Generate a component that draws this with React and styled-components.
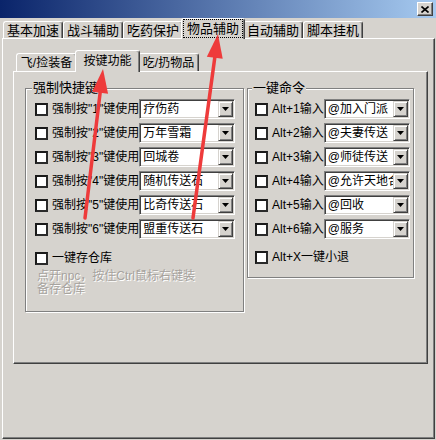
import React from 'react';
import styled, { createGlobalStyle } from 'styled-components';

const Global = createGlobalStyle`
  html, body { margin: 0; padding: 0; background: #d6d3ce; }
  body {
    width: 436px; height: 440px; overflow: hidden;
    font-family: "Liberation Sans", "Noto Sans CJK SC", sans-serif;
    color: #000;
  }
`;

const FACE = '#d6d3ce';

const Window = styled.div`
  position: relative;
  width: 436px;
  height: 440px;
  background: ${FACE};
  display: flex;
  flex-direction: column;
  overflow: hidden;
`;

const TitleBar = styled.div`
  flex-shrink: 0;
  height: 18px;
  background: linear-gradient(to right, #0a246a, #a6caf0);
  display: flex;
  justify-content: flex-end;
  align-items: center;
  padding-right: 3px;
`;

const CloseButton = styled.div`
  width: 16px;
  height: 14px;
  box-sizing: border-box;
  background: ${FACE};
  border: 1px solid;
  border-color: #fff #404040 #404040 #fff;
  box-shadow: inset -1px -1px 0 #808080;
  display: flex;
  align-items: center;
  justify-content: center;
`;

const Body = styled.div`
  flex: 1;
  display: flex;
  flex-direction: column;
  padding: 0 1px 1px 2px;
  min-height: 0;
`;

const TabStrip = styled.div`
  display: flex;
  align-items: flex-end;
  height: ${p => p.$h}px;
  padding-left: ${p => p.$pad}px;
  position: relative;
  z-index: 2;
  flex-shrink: 0;
`;

const Tab = styled.div`
  box-sizing: border-box;
  width: ${p => (p.$active ? p.$w + 4 : p.$w)}px;
  margin: 0 ${p => (p.$active ? -2 : 0)}px ${p => (p.$active ? -1 : 0)}px;
  height: ${p => (p.$active ? p.$hA : p.$hI)}px;
  background: ${FACE};
  border-top: 1px solid #fff;
  border-left: 1px solid #fff;
  border-right: 1px solid #404040;
  box-shadow: inset -1px 0 0 #808080;
  border-radius: 3px 3px 0 0;
  display: flex;
  justify-content: center;
  align-items: center;
  padding-bottom: ${p => (p.$active ? 2 : 0)}px;
  font-size: ${p => p.$fs}px;
  line-height: ${p => p.$fs + 2}px;
  white-space: nowrap;
  position: relative;
  z-index: ${p => (p.$active ? 3 : 1)};
`;

const TabLabel = styled.span`
  padding: 0 2px;
  outline: ${p => (p.$focus ? '1px dotted #000' : 'none')};
  outline-offset: 1px;
`;

const OuterPanel = styled.div`
  flex: 1;
  box-sizing: border-box;
  border: 1px solid;
  border-color: #fff #404040 #404040 #fff;
  box-shadow: inset -1px -1px 0 #808080;
  padding: 11px 0 0 10px;
  display: flex;
  flex-direction: column;
`;

const InnerControl = styled.div`
  width: 415px;
  display: flex;
  flex-direction: column;
`;

const InnerPanel = styled.div`
  box-sizing: border-box;
  height: 293px;
  border: 1px solid;
  border-color: #fff #404040 #404040 #fff;
  box-shadow: inset -1px -1px 0 #808080;
  padding: 9px 0 0 11px;
  display: flex;
  align-items: flex-start;
  gap: 3px;
`;

const Group = styled.fieldset`
  box-sizing: border-box;
  width: ${p => p.$w}px;
  min-width: 0;
  margin: 0;
  padding: ${p => p.$pad};
  border: 1px solid #808080;
  box-shadow: 1px 1px 0 #fff, inset 1px 1px 0 #fff;
  display: flex;
  flex-direction: column;
`;

const Legend = styled.legend`
  font-size: 13px;
  line-height: 14px;
  padding: 0 1px;
  margin-left: -3px;
  background: ${FACE};
`;

const Row = styled.div`
  height: 24px;
  display: flex;
  align-items: center;
  margin-top: ${p => p.$mt || 0}px;
  font-size: 12px;
  line-height: 14px;
  white-space: nowrap;
`;

const Check = styled.span`
  box-sizing: border-box;
  width: 13px;
  height: 13px;
  flex-shrink: 0;
  background: #fff;
  border: 2px solid #1a1a1a;
  border-right-color: #2a2a2a;
  border-bottom-color: #2a2a2a;
  margin-right: 4px;
`;

const Label = styled.span`
  font-size: 12px;
`;

const Combo = styled.div`
  box-sizing: border-box;
  width: ${p => p.$w}px;
  height: 20px;
  margin-left: auto;
  flex-shrink: 0;
  background: #fff;
  border: 1px solid;
  border-color: #808080 #fff #fff #808080;
  box-shadow: inset 1px 1px 0 #404040, inset -1px -1px 0 ${FACE};
  display: flex;
  align-items: center;
  padding: 1px 1px 1px 2px;
`;

const ComboText = styled.span`
  flex: 1;
  min-width: 0;
  overflow: hidden;
  white-space: nowrap;
  font-size: 12px;
  line-height: 14px;
  padding-left: 1px;
`;

const DropButton = styled.span`
  box-sizing: border-box;
  width: 15px;
  height: 16px;
  flex-shrink: 0;
  background: ${FACE};
  border: 1px solid;
  border-color: ${FACE} #404040 #404040 ${FACE};
  box-shadow: inset 1px 1px 0 #fff, inset -1px -1px 0 #808080;
  display: flex;
  align-items: center;
  justify-content: center;
`;

const Hint = styled.div`
  padding-left: 2px;
  font-size: 12px;
  line-height: 13px;
  color: #a7a39e;
  text-shadow: 1px 1px 0 #fff;
  white-space: nowrap;
`;

const ArrowLayer = styled.svg`
  position: absolute;
  left: 0;
  top: 0;
  width: 436px;
  height: 440px;
  pointer-events: none;
  z-index: 10;
`;

function Arrow({ x1, y1, x2, y2, head = 24, half = 8, color = '#ee3b3b' }) {
  const dx = x2 - x1;
  const dy = y2 - y1;
  const len = Math.hypot(dx, dy);
  const ux = dx / len;
  const uy = dy / len;
  const bx = x2 - ux * head;
  const by = y2 - uy * head;
  const nx = -uy;
  const ny = ux;
  const pts = `${x2},${y2} ${bx + nx * half},${by + ny * half} ${bx - nx * half},${by - ny * half}`;
  return (
    <g>
      <line x1={x1} y1={y1} x2={bx + ux * 2} y2={by + uy * 2} stroke={color} strokeWidth="3.5" strokeLinecap="round" />
      <polygon points={pts} fill={color} />
    </g>
  );
}

const DownTriangle = () => (
  <svg width="7" height="4" viewBox="0 0 7 4">
    <polygon points="0,0 7,0 3.5,4" fill="#000" />
  </svg>
);

function ComboBox({ w, value }) {
  return (
    <Combo $w={w}>
      <ComboText>{value}</ComboText>
      <DropButton><DownTriangle /></DropButton>
    </Combo>
  );
}

const outerTabs = ['基本加速', '战斗辅助', '吃药保护', '物品辅助', '自动辅助', '脚本挂机'];
const innerTabs = ['飞/捡装备', '按键功能', '吃/扔物品'];
const forceItems = ['疗伤药', '万年雪霜', '回城卷', '随机传送石', '比奇传送石', '盟重传送石'];
const altItems = ['@加入门派', '@夫妻传送', '@师徒传送', '@允许天地合一', '@回收', '@服务'];

export default function App() {
  return (
    <>
      <Global />
      <Window>
        <TitleBar>
          <CloseButton>
            <svg width="8" height="7" viewBox="0 0 8 7">
              <path d="M0.5 0.5 L7.5 6.5 M7.5 0.5 L0.5 6.5" stroke="#000" strokeWidth="1.6" />
            </svg>
          </CloseButton>
        </TitleBar>
        <Body>
          <TabStrip $h={20} $pad={1}>
            {outerTabs.map((t, i) => (
              <Tab key={t} $w={60} $fs={13} $hI={17} $hA={21} $active={i === 3}>
                <TabLabel $focus={i === 3}>{t}</TabLabel>
              </Tab>
            ))}
          </TabStrip>
          <OuterPanel>
            <InnerControl>
              <TabStrip $h={21} $pad={3}>
                {innerTabs.map((t, i) => (
                  <Tab key={t} $w={61} $fs={12} $hI={18} $hA={22} $active={i === 1}>
                    <TabLabel>{t}</TabLabel>
                  </Tab>
                ))}
              </TabStrip>
              <InnerPanel>
                <Group $w={219} $pad="2px 8px 15px 9px">
                  <Legend>强制快捷键</Legend>
                  {forceItems.map((v, i) => (
                    <Row key={v}>
                      <Check />
                      <Label>强制按"{i + 1}"键使用</Label>
                      <ComboBox w={96} value={v} />
                    </Row>
                  ))}
                  <Row $mt={5}>
                    <Check />
                    <Label>一键存仓库</Label>
                  </Row>
                  <Hint>
                    点开npc，按住Ctrl鼠标右键装
                    <br />
                    备存仓库
                  </Hint>
                </Group>
                <Group $w={167} $pad="2px 7px 8px 7px">
                  <Legend>一键命令</Legend>
                  {altItems.map((v, i) => (
                    <Row key={v}>
                      <Check />
                      <Label>Alt+{i + 1}输入</Label>
                      <ComboBox w={86} value={v} />
                    </Row>
                  ))}
                  <Row $mt={4}>
                    <Check />
                    <Label>Alt+X一键小退</Label>
                  </Row>
                </Group>
              </InnerPanel>
            </InnerControl>
          </OuterPanel>
        </Body>
        <ArrowLayer viewBox="0 0 436 440">
          <Arrow x1={85} y1={218} x2={103} y2={69} />
          <Arrow x1={193} y1={218} x2={218} y2={34} />
        </ArrowLayer>
      </Window>
    </>
  );
}
